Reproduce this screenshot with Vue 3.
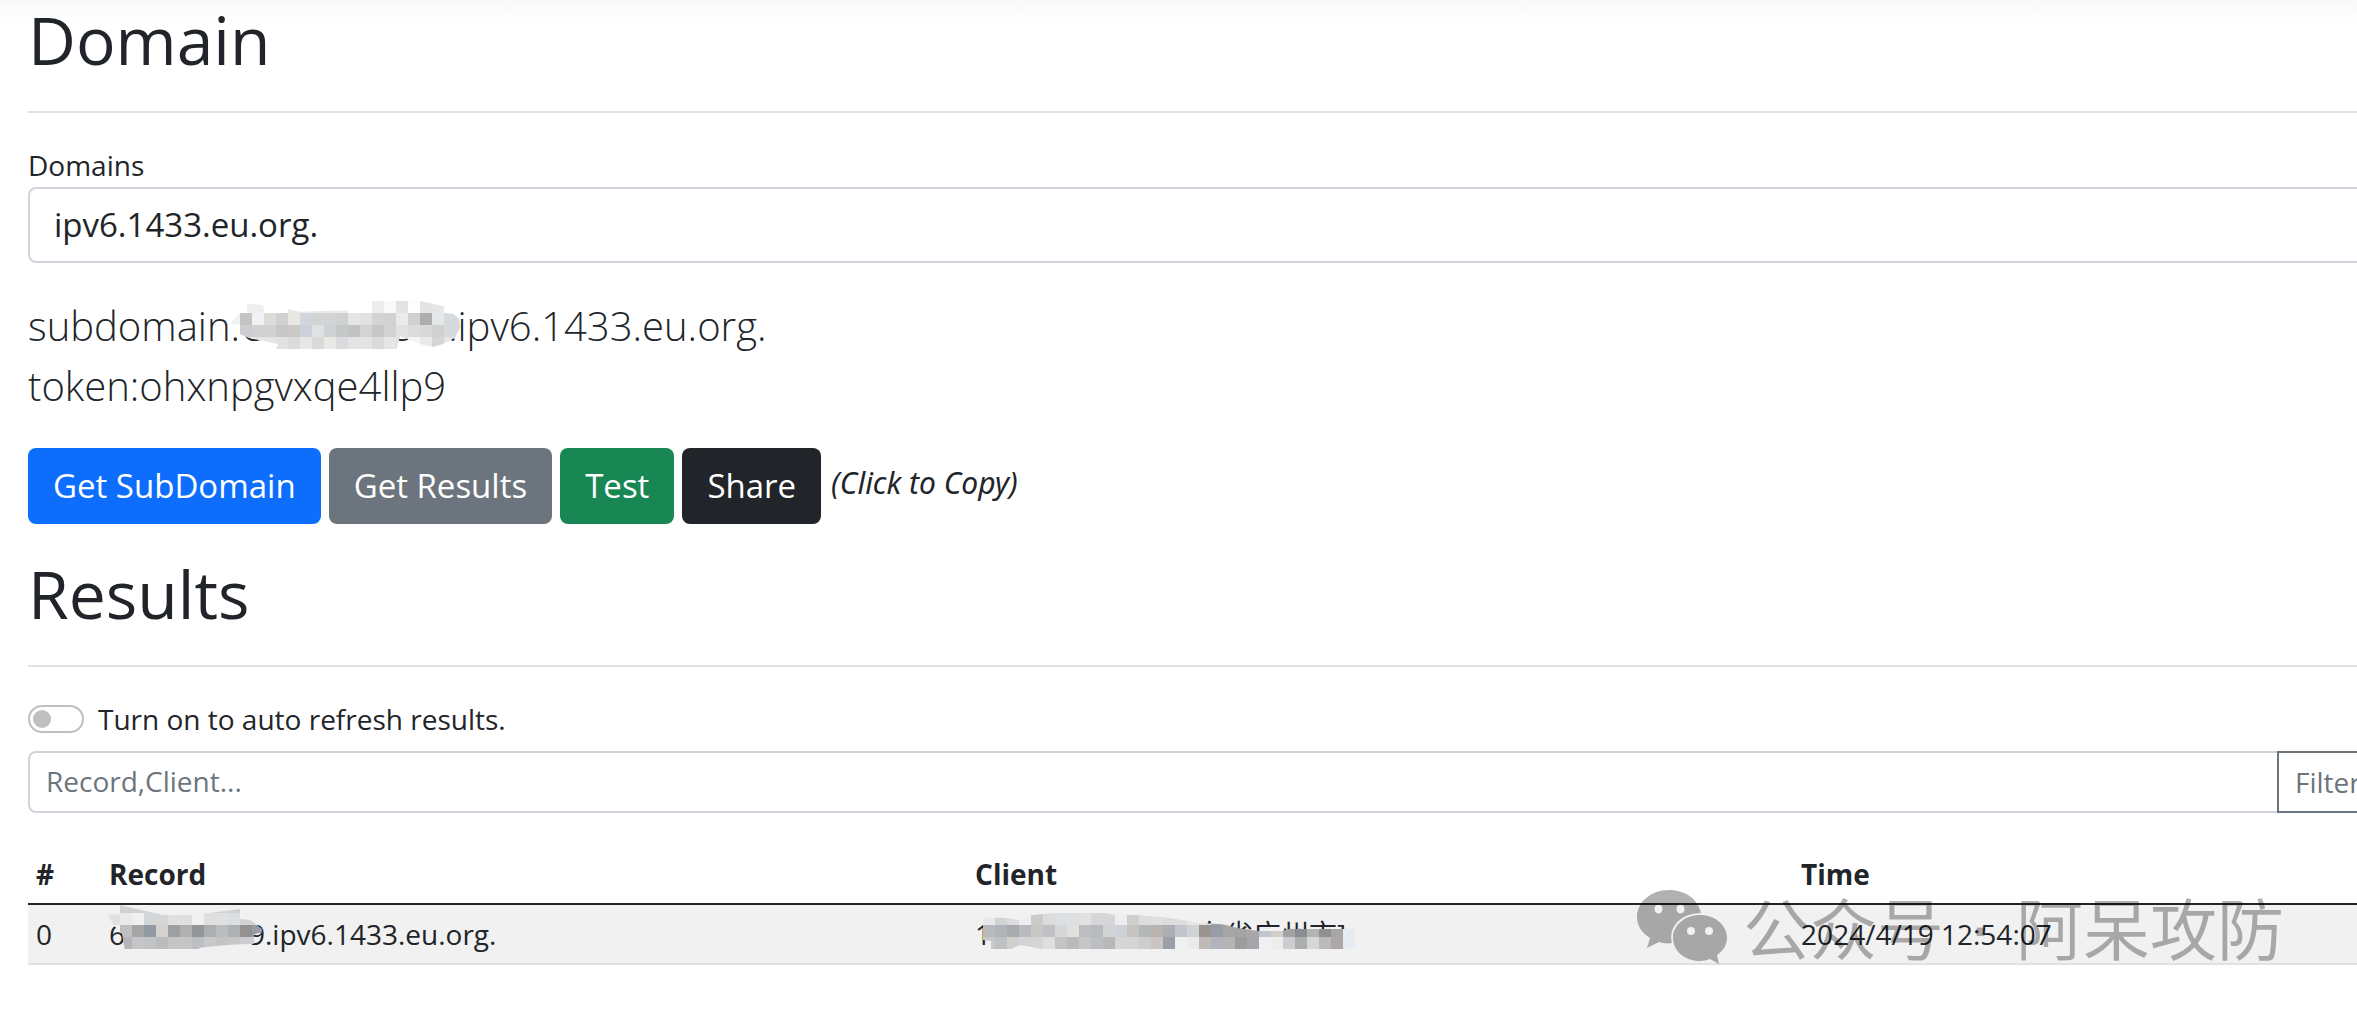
<script setup>
import { ref } from 'vue'

const domains = ['ipv6.1433.eu.org.']
const domain = ref(domains[0])
const autoRefresh = ref(false)
const query = ref('')

// Pixelated masks: `rows` holds one colour per 36-unit tile, `outline` is the brushed area.
function mask(x, y, width, height, startX, startY, outline, rows) {
  const tiles = rows.flatMap((row, r) =>
    row.split(' ').map((color, c) => ({
      x: startX + c * 36,
      y: startY + r * 36,
      fill: '#' + color
    }))
  )
  return { box: `${x} ${y} ${width} ${height}`, outline, tiles }
}

const subdomainMask = mask(
  24, 30, 720, 144, 24, 30,
  '30,100 60,66 80,66 82,38 130,42 132,66 204,66 204,54 240,62 300,60 383,58 384,66 456,66 456,30 600,30 672,46 672,66 700,68 718,84 720,110 705,140 670,158 640,168 610,162 540,136 530,174 168,174 174,160 85,140 60,130 60,100',
  [
    'f0f0f0 f0f0f0 eceef0 ececec ececec e8e8e8 ebebeb ebebeb ebebeb ebebeb f0f0f0 f0f0f0 eceded f8f9fb e4e4e4 fcfefe e4e4e5 e6e6e6 e6e6e6 e6e6e6',
    'f0f0f0 c4c4c4 f1f2f5 dcdcda cfd0d0 e9e7e2 d2d5dc d3d4d5 d3d4d5 d0d1d3 e5e5e6 e1e2e4 d3d4d5 d0d2d4 edebe8 ced1d0 adacae e4e8e9 d7dadd d7dadd',
    'f0f0f0 cbcdd0 d2d0ce d0d1d3 c7c7c8 cbc8c6 ccd0d8 dfe1e4 d0d1d3 c4c8c9 c2c2c2 d2d4d6 c7c7c6 d2d3d4 e2e1df dadddb d9d9da d0d1cf d7dadd d7dadd',
    'e6e6e6 e6e6e6 e6e6e6 e5e5e5 e1e1e1 dadbdd e7e7e7 dadadb eae9e6 dadbdf e4e4e4 e4e4e4 dadadb e5e5e3 dfe0de f4f4f4 eaeaea d5d5d8 e6e6e6 e6e6e6'
  ]
)

const recordMask = mask(
  24, 12, 468, 144, 24, 12,
  '24,54 60,52 60,24 110,36 190,54 275,54 276,84 312,84 312,50 420,36 420,66 450,68 486,96 486,106 462,112 462,140 380,144 300,152 296,156 74,156 66,110 40,84',
  [
    'd1d1d1 d1d1d1 d1d1d1 d1d1d1 d1d1d1 d1d1d1 d1d1d1 d1d1d1 d1d1d1 d1d1d1 d1d1d1 d1d1d1 d1d1d1',
    'e0e0e0 e8eaec f0f0ee d4d7d9 d6d6d6 e0e0e0 dde0e3 f1f1f1 e0dfde dfe0e1 dcdfe2 d3d3d3 d3d3d3',
    'f1f1f1 bebfc1 a5a5a5 9199a3 d3d2d0 9da0a3 b2b0ae 949599 adafaf bbbcbf aeb0b3 949291 979da2',
    'b3b5b8 b3b5b8 c4c5c6 c2c3c5 bbbcbd c4c5c6 c4c5c6 bbbfc3 c8c8c8 c3c3c4 c6c6c6 cccdd0 d0d0d0'
  ]
)

const clientMask = mask(
  96, 216, 1122, 108, 102, 216,
  '96,228 180,232 215,238 250,222 320,216 465,216 500,222 560,222 640,228 720,240 750,246 820,250 870,262 930,270 1000,270 1020,264 1218,264 1216,320 1182,324 280,324 215,312 185,324 126,324 126,300 96,296',
  [
    'e8e8e8 d2d4d4 dcdcdc eceef0 cbcbc8 dcddda dde0e3 e0e0e0 e0e2e4 d6d6d6 d6d6d6 eceef2 cecece dcdedd dfdfdf dcdcdc dedede e6e6e6 e0e0e0 a5a5a5 a5a5a5',
    'b9babe b0b3b7 a8acaf b9bbc0 cac8c5 bfc1c4 d6d7d8 e2e0df bbbdc0 b9babf d2d3d4 cfd1d8 c5c4c1 b4b7ba bab4ae abaeb3 c0c5ce d2d3d4 9a9490 989ca7 a5a5a5 a3a3a3 a8a8ac c1c5cf d0ceca a0a2a6 8b8e90 b4b5b3 8e9091 a7a6a5 e6ecf1',
    'c8c8c8 bdc1c4 d1cecb d3d4d7 d5d5d5 dedede c4c4c4 b9bbbf c8c6c4 bbbec3 b8b8b8 d5d6d8 d4d4d4 cdcdcb cac5c2 9a9fa8 eef0f2 ebeae8 c0bab7 b2b4bd b5b5b5 9c9d9e a6a6aa eef0f2 eeecea cbcdd0 acaeb0 d6d8d6 bababa ada8a7 e6ecf1'
  ]
)

const masks = { subdomain: subdomainMask, record: recordMask, client: clientMask }
</script>

<template>
  <div class="page">
    <svg class="defs" width="0" height="0" aria-hidden="true">
      <defs>
        <template v-for="(m, name) in masks" :key="name">
          <clipPath :id="`clip-${name}`"><polygon :points="m.outline" /></clipPath>
          <symbol :id="`mask-${name}`" :viewBox="m.box">
            <g :clip-path="`url(#clip-${name})`" shape-rendering="crispEdges">
              <rect v-for="(t, i) in m.tiles" :key="i" :x="t.x" :y="t.y" width="37" height="37" :fill="t.fill" />
            </g>
          </symbol>
        </template>
      </defs>
    </svg>

    <main class="content">
      <section>
        <h1 class="title">Domain</h1>
        <label class="label" for="domain">Domains</label>
        <select id="domain" v-model="domain" class="domain-select">
          <option v-for="d in domains" :key="d" :value="d">{{ d }}</option>
        </select>
        <div class="lead">
          <div>subdomain.<span class="masked masked-subdomain"><span>e</span><span>s</span><svg width="240" height="48" aria-hidden="true"><use href="#mask-subdomain" /></svg></span>.ipv6.1433.eu.org.</div>
          <div>token:ohxnpgvxqe4llp9</div>
        </div>
        <div class="actions">
          <button type="button" class="btn primary">Get SubDomain</button>
          <button type="button" class="btn secondary">Get Results</button>
          <button type="button" class="btn success">Test</button>
          <button type="button" class="btn dark">Share</button>
          <em class="hint">(Click to Copy)</em>
        </div>
      </section>

      <section class="results">
        <h1 class="title">Results</h1>
        <div class="toggle">
          <input id="auto" v-model="autoRefresh" type="checkbox" role="switch" class="switch" />
          <label for="auto">Turn on to auto refresh results.</label>
        </div>
        <div class="search">
          <input v-model="query" type="text" class="search-input" placeholder="Record,Client..." aria-label="Record or client" />
          <button type="button" class="filter">Filter</button>
        </div>
        <table class="table">
          <thead>
            <tr>
              <th class="col-index" scope="col">#</th>
              <th class="col-record" scope="col">Record</th>
              <th class="col-client" scope="col">Client</th>
              <th scope="col">Time</th>
            </tr>
          </thead>
          <tbody>
            <tr>
              <td>0</td>
              <td><span class="masked masked-record"><span>6</span><span>9</span><svg width="156" height="48" aria-hidden="true"><use href="#mask-record" /></svg></span>.ipv6.1433.eu.org.</td>
              <td><span class="masked masked-client"><span>1</span><span>东省广州市]</span><svg width="374" height="36" aria-hidden="true"><use href="#mask-client" /></svg></span></td>
              <td>2024/4/19 12:54:07</td>
            </tr>
          </tbody>
        </table>
      </section>
    </main>

    <div class="watermark">
      <svg width="92" height="76" viewBox="0 0 92 76" aria-hidden="true">
        <path fill-rule="evenodd" d="M32 1C14 1 0 13 0 28c0 9 5 16 13 21l-3 10 12-6c4 1 8 2 13 1 -4-16 9-30 29-30C61 10 48 1 32 1ZM21.500 15.500a4 4.500 0 1 1 0 9a4 4.500 0 1 1 0-9ZM43.500 15.500a4 4.500 0 1 1 0 9a4 4.500 0 1 1 0-9Z" />
        <path fill-rule="evenodd" d="M63 26C48 26 36 36 36 49s12 23 27 23c4 0 7-1 10-2l9 5-2-9c6-4 10-10 10-17C90 36 78 26 63 26ZM54 38a4 4 0 1 1 0 8a4 4 0 1 1 0-8ZM72 38a4 4 0 1 1 0 8a4 4 0 1 1 0-8Z" />
      </svg>
      <span>公众号<span class="dot"> · </span>阿呆攻防</span>
    </div>
  </div>
</template>

<style>
body {
  margin: 0;
  background: #fff;
}
</style>

<style scoped>
.page {
  position: relative;
  overflow: hidden;
  color: #212529;
  font-family: "Open Sans", "Noto Sans CJK SC", sans-serif;
  font-size: 28px;
  line-height: 42px;
  background: linear-gradient(#f8f8f8, #fff 22px);
}
.page *,
.page *::before {
  box-sizing: border-box;
}
.defs {
  position: absolute;
}
.content {
  margin-right: -31px;
  padding-left: 28px;
}
button,
input,
select {
  margin: 0;
  font: inherit;
}
.title {
  margin: 0 0 31px;
  padding-bottom: 33px;
  border-bottom: 2px solid #dee2e6;
  font-size: 66px;
  font-weight: 400;
  line-height: 78px;
}
.label {
  display: block;
}
.domain-select {
  display: block;
  width: 100%;
  height: 76px;
  margin-top: 1px;
  padding: 0 24px;
  border: 2px solid #ced4da;
  border-radius: 8px;
  background: #fff;
  color: inherit;
  font-size: 33px;
  appearance: none;
}
.lead {
  margin: 33px 0 32px;
  font-size: 40px;
  font-weight: 300;
  line-height: 60px;
  white-space: nowrap;
}
.masked {
  position: relative;
  display: inline-flex;
  justify-content: space-between;
  white-space: nowrap;
}
.masked svg {
  position: absolute;
}
.masked-subdomain {
  width: 208px;
  padding: 0 36px 0 2px;
}
.masked-subdomain svg {
  left: -12px;
  top: 5px;
}
.masked-record {
  width: 156px;
}
.masked-record svg {
  left: -1px;
  top: -12px;
}
.masked-client {
  width: 371px;
}
.masked-client svg {
  left: 6px;
  top: 0;
}
.actions {
  display: flex;
  align-items: center;
  gap: 8px;
}
.btn {
  height: 76px;
  padding: 0 25px;
  border: 0;
  border-radius: 8px;
  color: #fff;
  font-size: 33px;
}
.primary {
  background: #0d6efd;
}
.secondary {
  background: #6c757d;
}
.success {
  background: #198754;
}
.dark {
  background: #212529;
}
.hint {
  padding: 0 2px 6px;
  font-family: "Noto Sans", sans-serif;
  font-size: 30px;
}
.results {
  margin-top: 30px;
}
.toggle {
  display: flex;
  align-items: center;
  gap: 14px;
  margin-bottom: 11px;
}
.switch {
  display: flex;
  align-items: center;
  width: 56px;
  height: 28px;
  padding: 0 3px;
  border: 2px solid #bfbfbf;
  border-radius: 14px;
  background: #fff;
  appearance: none;
}
.switch::before {
  content: "";
  width: 18px;
  height: 18px;
  border-radius: 50%;
  background: #bfbfbf;
}
.switch:checked {
  justify-content: flex-end;
}
.search {
  display: flex;
  margin-bottom: 32px;
}
.search-input {
  flex: 1;
  height: 62px;
  padding: 0 16px 2px;
  border: 2px solid #ced4da;
  border-right: 0;
  border-radius: 8px 0 0 8px;
  background: #fff;
  color: inherit;
}
.search-input::placeholder {
  color: #6c757d;
  opacity: 1;
}
.filter {
  width: 111px;
  height: 62px;
  padding: 0 16px;
  border: 2px solid #6c757d;
  border-radius: 0 8px 8px 0;
  background: #fff;
  color: #6c757d;
  text-align: left;
}
.table {
  width: 100%;
  border-collapse: separate;
  border-spacing: 0;
  table-layout: fixed;
  text-align: left;
}
.table th,
.table td {
  height: 60px;
  padding: 0 8px;
  white-space: nowrap;
}
.table th {
  border-bottom: 2px solid #212529;
  font-weight: 700;
}
.table td {
  border-bottom: 2px solid #dee2e6;
  background: #f1f1f1;
}
.masked-record,
.masked-client {
  vertical-align: top;
}
.col-index {
  width: 73px;
}
.col-record {
  width: 36.7%;
}
.col-client {
  width: 35%;
}
.watermark {
  position: absolute;
  right: 73px;
  bottom: 0;
  display: flex;
  align-items: center;
  gap: 14px;
  height: 76px;
  color: #000;
  font-family: "Noto Sans CJK SC", sans-serif;
  font-size: 67px;
  line-height: 76px;
  white-space: nowrap;
  opacity: 0.3;
  pointer-events: none;
}
.dot {
  padding: 0 4px;
  font-family: "DejaVu Sans", sans-serif;
  line-height: 1;
}
</style>
